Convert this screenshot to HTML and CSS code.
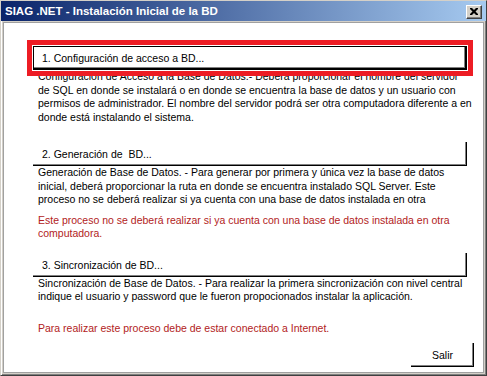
FILE: index.html
```html
<!DOCTYPE html>
<html lang="es">
<head>
    <meta charset="UTF-8">
    <title>SIAG .NET - Instalación Inicial de la BD</title>
    <link rel="stylesheet" href="styles.css">
</head>
<body>
    <div class="window">
        <div class="titlebar">
            <span class="title">SIAG .NET - Instalación Inicial de la BD</span>
            <button class="close-btn" aria-label="Cerrar">
                <svg width="8" height="7" viewBox="0 0 8 7">
                    <path d="M0 0h2l2 2 2-2h2v1L5.5 3.5 8 6v1H6L4 5 2 7H0V6l2.5-2.5L0 1z" fill="#000"/>
                </svg>
            </button>
        </div>

        <div class="client">
            <section class="step step-first">
                <button class="step-btn is-default">1. Configuración de acceso a BD...</button>
                <span class="highlight"></span>
                <p class="step-text">Configuración de Acceso a la Base de Datos.- Deberá proporcionar el nombre del servidor<br>de SQL en donde se instalará o en donde se encuentra la base de datos y un usuario con<br>permisos de administrador. El nombre del servidor podrá ser otra computadora diferente a en<br>donde está instalando el sistema.</p>
            </section>

            <section class="step step-second">
                <button class="step-btn">2. Generación de  BD...</button>
                <p class="step-text">Generación de Base de Datos. - Para generar por primera y única vez la base de datos<br>inicial, deberá proporcionar la ruta en donde se encuentra instalado SQL Server. Este<br>proceso no se deberá realizar si ya cuenta con una base de datos instalada en otra</p>
                <p class="step-note">Este proceso no se deberá realizar si ya cuenta con una base de datos instalada en otra<br>computadora.</p>
            </section>

            <section class="step step-third">
                <button class="step-btn">3. Sincronización de BD...</button>
                <p class="step-text">Sincronización de Base de Datos. - Para realizar la primera sincronización con nivel central<br>indique el usuario y password que le fueron propocionados instalar la aplicación.</p>
                <p class="step-note note-far">Para realizar este proceso debe de estar conectado a Internet.</p>
            </section>

            <div class="actions">
                <button class="exit-btn">Salir</button>
            </div>
        </div>
    </div>
</body>
</html>
```

FILE: styles.css
```css
html, body {
    margin: 0;
    padding: 0;
}

body {
    width: 487px;
    height: 376px;
    background-color: #d4d0c8;
    font-family: "Liberation Sans", Arial, sans-serif;
    font-size: 10.5px;
    color: #000;
    overflow: hidden;
}

.window {
    box-sizing: border-box;
    width: 487px;
    height: 376px;
    display: flex;
    flex-direction: column;
    padding: 0 2px 2px 2px;
    border: 1px solid;
    border-color: #d4d0c8 #404040 #404040 #d4d0c8;
    box-shadow: inset 1px 1px #fff, inset -1px -1px #808080;
    background-color: #d4d0c8;
}

/* title bar */
.titlebar {
    height: 20px;
    display: flex;
    align-items: center;
    justify-content: space-between;
    margin: 0 -2px;
    padding: 0 4px;
    background: linear-gradient(to right, #0a246a, #a6caf0);
}

.title {
    color: #fff;
    font-weight: bold;
    font-size: 11.5px;
    white-space: nowrap;
}

.close-btn {
    width: 16px;
    height: 14px;
    padding: 0;
    margin-top: 1px;
    display: flex;
    align-items: center;
    justify-content: center;
    background-color: #d4d0c8;
    border: 1px solid;
    border-color: #fff #404040 #404040 #fff;
    box-shadow: inset -1px -1px #808080;
}

/* client area */
.client {
    flex: 1;
    margin-top: 1px;
    display: flex;
    flex-direction: column;
    padding: 23px 9px 5px 29px;
    background-color: #fff;
    border: 1px solid #a0a0a0;
}

.step {
    position: relative;
}

.step-second {
    margin-top: 18px;
}

.step-third {
    margin-top: 12px;
}

.step-btn,
.exit-btn {
    box-sizing: border-box;
    height: 24px;
    font-family: inherit;
    font-size: inherit;
    color: #000;
    background-color: #fff;
    border: none;
    box-shadow: inset -1px -1px #000, inset -2px -2px #808080;
    white-space: pre;
}

.step-btn {
    display: block;
    width: 434px;
    padding: 0 0 0 9px;
    text-align: left;
}

.step-btn.is-default {
    border: 1px solid #000;
    padding-left: 8px;
}

/* red marker drawn over the first step */
.highlight {
    position: absolute;
    top: -6px;
    left: -6px;
    width: 446px;
    height: 36px;
    box-sizing: border-box;
    border: 5px solid #ed1c24;
    z-index: 2;
}

.step-text,
.step-note {
    margin: 0;
    padding-left: 5px;
    line-height: 13.5px;
    white-space: nowrap;
}

.step-note {
    color: #b22222;
    margin-top: 7px;
}

.note-far {
    margin-top: 18px;
}

.actions {
    margin-top: auto;
    display: flex;
    justify-content: flex-end;
}

.exit-btn {
    width: 63px;
    text-align: center;
    padding: 0;
}
```
